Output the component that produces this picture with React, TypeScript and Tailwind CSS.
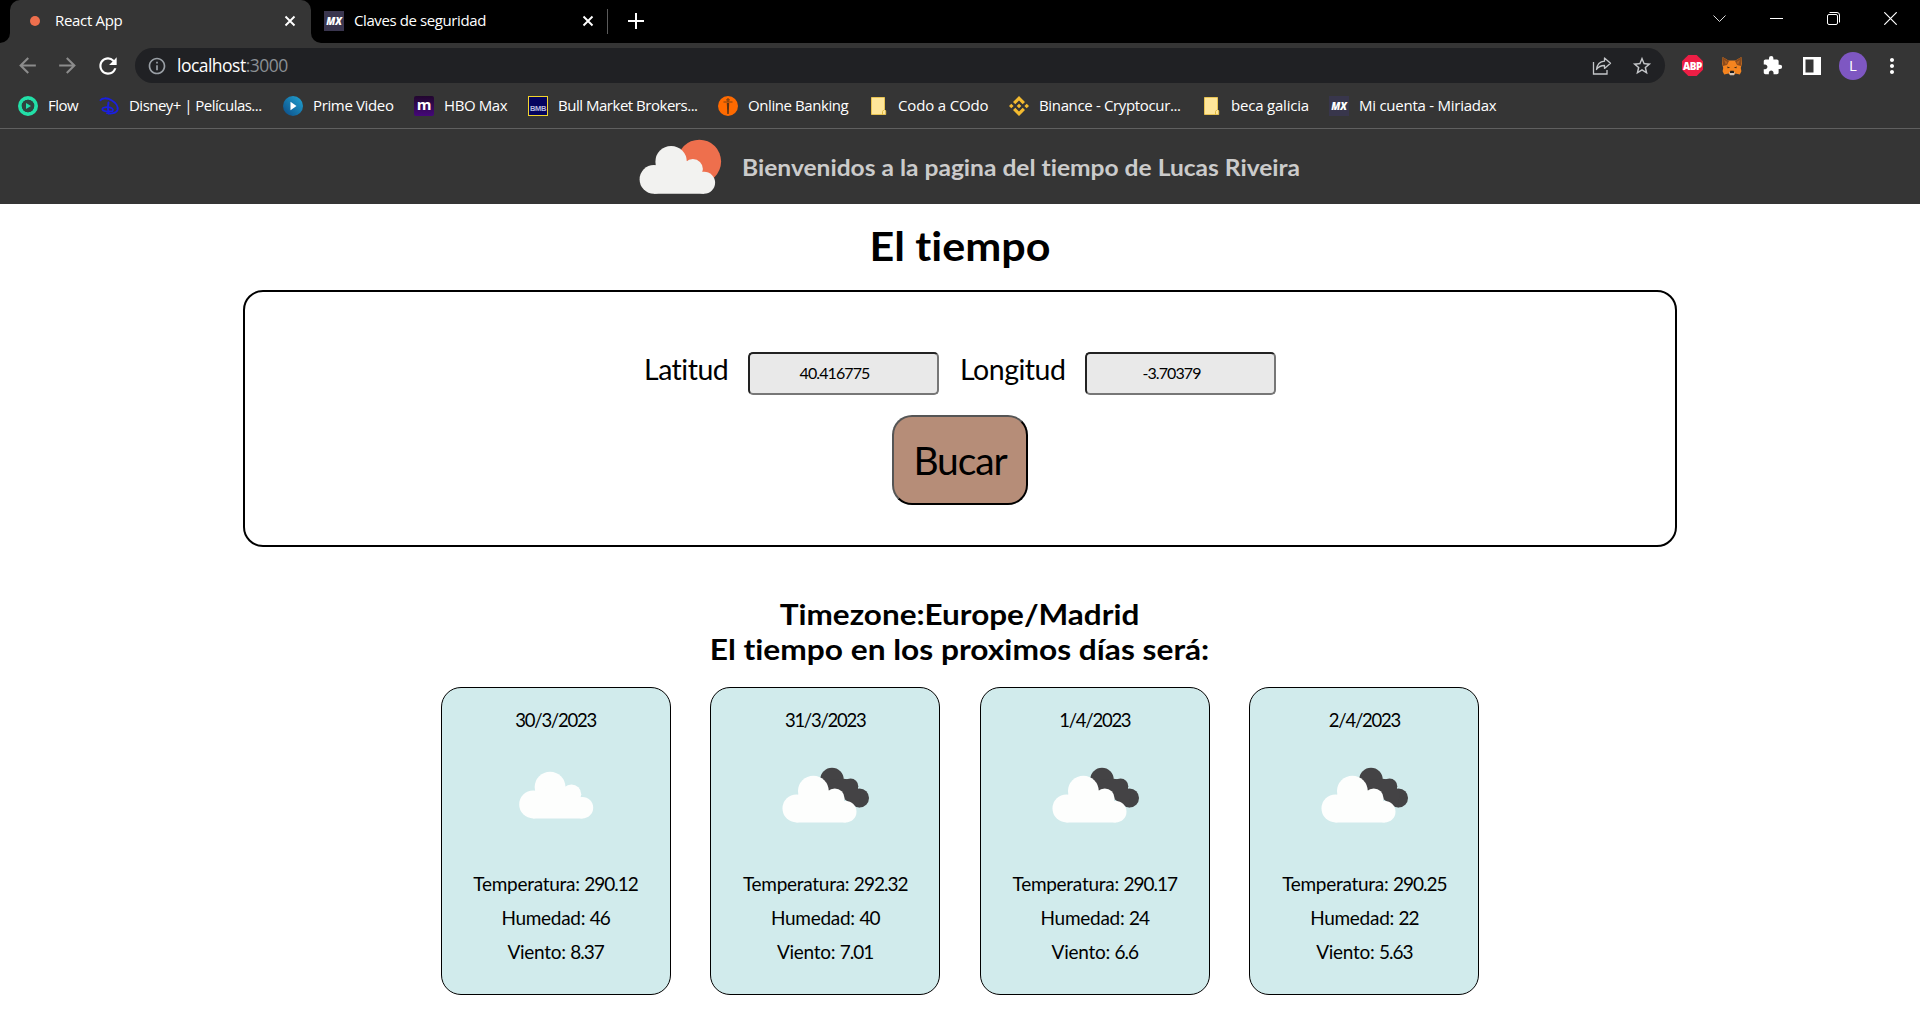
import type { ReactNode } from "react";
import { MdArrowBack, MdArrowForward, MdRefresh, MdInfoOutline, MdStarBorder, MdExtension, MdMoreVert } from "react-icons/md";

const CloseX = () => (
  <svg width="12" height="12" viewBox="0 0 12 12" stroke="#fff" strokeWidth="1.9">
    <path d="M1.5 1.5l9 9M10.5 1.5l-9 9" />
  </svg>
);

const MxIcon = ({ bg }: { bg: string }) => (
  <span className={`flex size-5 items-center justify-center text-[10px] leading-none font-extrabold italic text-white ${bg}`}>MX</span>
);

const FolderIcon = () => (
  <svg width="20" height="20" viewBox="0 0 20 20">
    <path d="M3.5 1.5h13v12l1.2 1.2v3.8H3.5z" fill="#ffe69a" stroke="#e8c352" strokeWidth="1" />
    <path d="M14.5 18.5v-3l1.2-1.5" fill="none" stroke="#e0b93f" strokeWidth="1" />
  </svg>
);

const FlowIcon = () => (
  <svg width="20" height="20" viewBox="0 0 20 20">
    <circle cx="10" cy="10" r="8.1" fill="none" stroke="#22e0a8" strokeWidth="3.8" />
    <circle cx="10" cy="10" r="6.2" fill="#2f4540" />
    <path d="M8 7l5 3-5 3z" fill="#22e0a8" />
  </svg>
);

const DisneyIcon = () => (
  <svg width="21" height="20" viewBox="0 0 21 20" fill="none" stroke="#1a1fe0" strokeLinecap="round">
    <path d="M1.5 4.2C3 1.8 8 1.6 12.5 4.2c4.5 2.6 7 6.6 6 9.8-1.1 3.2-6.5 4.2-10.5 3.2" strokeWidth="1.9" />
    <path d="M9.5 6.5c-.8 3.5-.8 7.5.2 11" strokeWidth="2" />
    <path d="M9 11.2c-3.5-.2-6.5 1-5.5 2.6 1.2 1.8 6 1.9 10 1.4 1.5-2.2-1.5-4-4-3.8" strokeWidth="1.7" />
  </svg>
);

const PrimeIcon = () => (
  <svg width="20" height="20" viewBox="0 0 20 20">
    <defs>
      <linearGradient id="prime" x1="1" y1="0" x2="0" y2="1">
        <stop offset="0" stopColor="#22a5d4" />
        <stop offset="1" stopColor="#0b4a85" />
      </linearGradient>
    </defs>
    <circle cx="10" cy="10" r="10" fill="url(#prime)" />
    <path d="M7.5 5.8l6 4.2-6 4.2z" fill="#fff" />
  </svg>
);

const HboIcon = () => (
  <span className="flex size-5 justify-center rounded-[2px] bg-linear-to-b from-[#22062f] to-[#45067a] font-['Open_Sans'] text-[15px] leading-[17px] font-bold text-white">m</span>
);

const BmbIcon = () => (
  <span className="flex size-5 items-end justify-center overflow-hidden border border-[#f2d52c] bg-[#04045e] pb-[2px] font-['Liberation_Sans'] text-[7.5px] leading-[8px] tracking-[-0.3px] font-bold text-[#b9b9dd]">BMB</span>
);

const BankIcon = () => (
  <svg width="20" height="20" viewBox="0 0 20 20">
    <circle cx="10" cy="10" r="10" fill="#ff6a00" />
    <path d="M8.8 7h2.4l-.5 11H9.3z" fill="#5a3212" />
    <path d="M5.5 6h9M10 2v4M8.2 3.8h3.6" stroke="#7a4212" strokeWidth="1.2" />
  </svg>
);

const BinanceIcon = () => (
  <svg width="20" height="20" viewBox="0 0 20 20" fill="#f3ba2f">
    <path d="M10 7.7l2.3 2.3L10 12.3 7.7 10zM2.3 7.7L4.6 10l-2.3 2.3L0 10zM17.7 7.7L20 10l-2.3 2.3-2.3-2.3z" />
    <path d="M10 0l6 6-2.3 2.3L10 4.6 6.3 8.3 4 6zM10 20l6-6-2.3-2.3L10 15.4l-3.7-3.7L4 14z" />
  </svg>
);

const bookmarks: { label: string; icon: ReactNode; cls: string }[] = [
  { label: "Flow", icon: <FlowIcon />, cls: "w-[81px] tracking-[-0.5px]" },
  { label: "Disney+ | Películas...", icon: <DisneyIcon />, cls: "w-[184px] tracking-[-0.52px]" },
  { label: "Prime Video", icon: <PrimeIcon />, cls: "w-[131px] tracking-[-0.36px]" },
  { label: "HBO Max", icon: <HboIcon />, cls: "w-[114px] tracking-[-0.4px]" },
  { label: "Bull Market Brokers...", icon: <BmbIcon />, cls: "w-[190px] tracking-[-0.48px]" },
  { label: "Online Banking", icon: <BankIcon />, cls: "w-[150px] tracking-[-0.42px]" },
  { label: "Codo a COdo", icon: <FolderIcon />, cls: "w-[141px] tracking-[-0.15px]" },
  { label: "Binance - Cryptocur...", icon: <BinanceIcon />, cls: "w-[192px] tracking-[-0.35px]" },
  { label: "beca galicia", icon: <FolderIcon />, cls: "w-[128px] tracking-[-0.2px]" },
  { label: "Mi cuenta - Miriadax", icon: <MxIcon bg="bg-[#38364c]" />, cls: "w-[180px] tracking-[-0.25px]" },
];

const ShareIcon = () => (
  <svg width="20" height="20" viewBox="0 0 20 20" fill="none" stroke="#c4c6c9" strokeWidth="1.3">
    <path d="M1.5 6v12H15v-4" />
    <path d="M12.5 2l6 5.2-6 5.2V9.5c-3.5 0-6 1-8 4 .5-4.5 3.2-7.8 8-8.3z" strokeLinejoin="round" />
  </svg>
);

const AbpIcon = () => (
  <span className="flex size-[21px] items-center justify-center bg-[#ed1e45] font-['Open_Sans'] text-[10px] leading-none font-extrabold tracking-[-0.5px] text-white [clip-path:polygon(30%_0,70%_0,100%_30%,100%_70%,70%_100%,30%_100%,0_70%,0_30%)]">ABP</span>
);

const FoxIcon = () => (
  <svg width="20" height="20" viewBox="0 0 20 20">
    <path d="M.6 1l5.9 3.5h7L19.4 1l.4 7-1 4 .6 3.2-1.6 3.3-4.3-1-1.5 1.5H8L6.5 17.500l-4.3 1L.6 15.2l.6-3.2-1-4z" fill="#f5841f" />
    <path d="M.6 1L7 5l-2 4-4.200 1zM19.4 1L13 5l2 4 4.2 1z" fill="#8a4a1c" />
    <path d="M2 4l3.5 2L4 9zM18 4l-3.5 2L16 9z" fill="#b5621f" />
    <path d="M5.2 10.5l3 1.3-2.6.5zM14.800 10.500l-3 1.3 2.6.5z" fill="#3a2a1c" />
    <path d="M7 16h6l-1 3.3H8z" fill="#d5c4b5" />
    <path d="M8.3 14.8h3.4l.5 2.2H7.800z" fill="#1c1c1c" />
  </svg>
);

const PanelIcon = () => (
  <svg width="18" height="18" viewBox="0 0 18 18">
    <path d="M0 0h18v18H0zM2.5 2.5v13h8v-13z" fill="#fff" fillRule="evenodd" />
  </svg>
);

const CloudShape = ({ fill }: { fill: string }) => (
  <g fill={fill}>
    <circle cx="14.3" cy="33.4" r="14.3" />
    <circle cx="31.5" cy="15.7" r="15.7" />
    <circle cx="53.3" cy="23" r="10" />
    <circle cx="64.5" cy="36.7" r="11" />
    <path d="M14.3 47.7h50.2V25.7L60 27 47 15 31 16 16 19.3v5L14.3 30z" />
  </g>
);

const SunCloud = () => (
  <svg width="84" height="56" viewBox="0 0 84 56">
    <circle cx="60.3" cy="22.5" r="21.8" fill="#ee6f4d" />
    <g transform="translate(.6 7)">
      <CloudShape fill="#f2f2f0" />
    </g>
  </svg>
);

const WeatherIcon = ({ broken }: { broken: boolean }) =>
  broken ? (
    <svg width="100" height="100" viewBox="0 0 100 100">
      <g transform="translate(7.5 30.7) scale(.98)">
        <g fill="#444345">
          <circle cx="50.5" cy="4" r="12" />
          <circle cx="69.5" cy="10.7" r="7.8" />
          <circle cx="78.6" cy="22.7" r="9.7" />
          <path d="M50 4l12-1 7.500 1 10 12-1 16.400-12-6-20-15z" />
        </g>
        <CloudShape fill="#fdfefd" />
      </g>
    </svg>
  ) : (
    <svg width="100" height="100" viewBox="0 0 100 100">
      <g transform="translate(13.2 26.7) scale(.98)">
        <CloudShape fill="#fdfefd" />
      </g>
    </svg>
  );

const days = [
  { date: "30/3/2023", temp: "290.12", hum: "46", wind: "8.37", broken: false },
  { date: "31/3/2023", temp: "292.32", hum: "40", wind: "7.01", broken: true },
  { date: "1/4/2023", temp: "290.17", hum: "24", wind: "6.6", broken: true },
  { date: "2/4/2023", temp: "290.25", hum: "22", wind: "5.63", broken: true },
];

const Stat = ({ name, value }: { name: string; value: string }) => (
  <p className="leading-[34px] tracking-[-0.28px]">
    {name}: <span className="tracking-[-1px]">{value}</span>
  </p>
);

function BrowserChrome() {
  return (
    <div className="h-[129px] border-b border-[#606060] bg-[#353535] font-['Open_Sans',sans-serif] text-[15px] text-white">
      <div className="flex h-[43px] bg-black">
        <div className="w-[10px] bg-[#353535]">
          <div className="h-full rounded-br-[10px] bg-black" />
        </div>
        <div className="flex w-[301px] items-center rounded-t-[10px] bg-[#353535] pb-px pl-5">
          <span className="size-[10px] rounded-full bg-[#ee6f4d]" />
          <span className="ml-[15px] flex-1 pb-px tracking-[-0.32px]">React App</span>
          <span className="mr-[15px]"><CloseX /></span>
        </div>
        <div className="w-[10px] bg-[#353535]">
          <div className="h-full rounded-bl-[10px] bg-black" />
        </div>
        <div className="flex w-[287px] items-center pb-px pl-[3px]">
          <MxIcon bg="bg-[#3a364f]" />
          <span className="ml-[10px] flex-1 pb-px tracking-[-0.4px]">Claves de seguridad</span>
          <span className="mr-[13px]"><CloseX /></span>
          <span className="h-[25px] w-px bg-[#5a5a5a]" />
        </div>
        <div className="flex flex-1 items-center pb-px pl-5">
          <svg width="16" height="16" viewBox="0 0 16 16" stroke="#fff" strokeWidth="2"><path d="M0 8h16M8 0v16" /></svg>
        </div>
        <div className="flex items-start gap-[44px] pt-3 pr-[23px]">
          <svg width="13" height="13" viewBox="0 0 13 13" fill="none" stroke="#ddd"><path d="M.5 3.5l6 6 6-6" /></svg>
          <svg width="13" height="13" viewBox="0 0 13 13" stroke="#fff"><path d="M0 6.500h13" /></svg>
          <svg width="13" height="13" viewBox="0 0 13 13" fill="none" stroke="#fff"><rect x=".5" y="2.5" width="10" height="10" rx="1.5" /><path d="M2.5.5H10A2.500 2.500 0 0112.500 3v7.500" /></svg>
          <svg width="13" height="13" viewBox="0 0 13 13" stroke="#fff" strokeWidth="1.2"><path d="M.3.3l12.4 12.4M12.7.3L.3 12.7" /></svg>
        </div>
      </div>
      <div className="flex h-[45px] items-center pl-[15px]">
        <MdArrowBack size={25} color="#8c8c8c" />
        <MdArrowForward size={25} color="#8c8c8c" className="ml-[15px]" />
        <MdRefresh size={26} color="#fff" className="ml-[15px]" />
        <div className="ml-[14px] flex h-[35px] w-[1530px] items-center rounded-full bg-[#202124] pl-[12px]">
          <MdInfoOutline size={20} color="#9aa0a6" />
          <span className="ml-[10px] flex-1 pb-px text-[17.5px] tracking-[-0.52px]">localhost<span className="text-[#8b8f94]">:3000</span></span>
          <ShareIcon />
          <MdStarBorder size={22} color="#c4c6c9" className="mr-[12px] ml-[19px]" />
        </div>
        <div className="ml-[17px] flex items-center">
          <AbpIcon />
          <span className="ml-[19px]"><FoxIcon /></span>
          <MdExtension size={21} color="#fff" className="ml-[20px]" />
          <span className="ml-[20px]"><PanelIcon /></span>
          <span className="ml-[18px] flex size-7 items-center justify-center rounded-full bg-[#7e57c2] text-[15px]">L</span>
          <MdMoreVert size={24} color="#fff" className="ml-[13px]" />
        </div>
      </div>
      <div className="flex h-9 items-center pl-[18px]">
        {bookmarks.map((b) => (
          <div key={b.label} className={`flex shrink-0 items-center whitespace-nowrap ${b.cls}`}>
            <span className="mr-[10px] w-5 tracking-normal">{b.icon}</span>
            <span className="pb-[2px]">{b.label}</span>
          </div>
        ))}
      </div>
    </div>
  );
}

function Field({ label, value, cls }: { label: string; value: string; cls: string }) {
  return (
    <div className="flex items-center gap-[19px]">
      <label className={`pb-[9px] text-[28.5px] leading-8 whitespace-nowrap ${cls}`}>{label}</label>
      <input
        readOnly
        value={value}
        className="h-[43px] w-[191px] rounded-[5px] border-2 border-t-[#222] border-r-[#777] border-b-[#777] border-l-[#222] bg-[#e9e9e9] pr-[18px] pb-[3px] text-center text-[16px] tracking-[-0.9px]"
      />
    </div>
  );
}

export default function App() {
  return (
    <div className="h-[1020px] overflow-hidden bg-white font-['Lato',sans-serif] text-black [font-variant-ligatures:none]">
      <BrowserChrome />
      <header className="flex h-[75px] bg-[#353535] pl-[638.7px]">
        <div className="pt-[10.3px]"><SunCloud /></div>
        <p className="ml-[19.5px] origin-left scale-x-[1.068] text-[23px] leading-[77px] font-bold whitespace-nowrap text-[#cbcbcb]">
          Bienvenidos a la pagina del tiempo de Lucas Riveira
        </p>
      </header>
      <main className="flex flex-col items-center">
        <h1 className="mt-[18px] scale-x-[1.09] text-[39.5px] leading-[48px] font-bold">El tiempo</h1>
        <section className="mt-5 flex h-[257px] w-[1434px] flex-col items-center rounded-[20px] border-2 border-black pt-[60px]">
          <div className="flex gap-[21px]">
            <Field label="Latitud" value="40.416775" cls="w-[85px] tracking-[-0.5px]" />
            <Field label="Longitud" value="-3.70379" cls="w-[106px] tracking-[-0.5px]" />
          </div>
          <button className="mt-5 h-[90px] w-[136px] rounded-[20px] border-2 border-t-[#555] border-r-black border-b-black border-l-[#555] bg-[#b68d78] text-[39px] leading-none tracking-[-1.1px]">
            Bucar
          </button>
        </section>
        <h2 className="mt-[49px] text-center text-[29px] leading-[35px] font-bold">
          <span className="block scale-x-[1.085]">Timezone:Europe/Madrid</span>
          <span className="block scale-x-[1.093]">El tiempo en los proximos días será:</span>
        </h2>
        <div className="mt-[21px] flex gap-[39.6px]">
          {days.map((d) => (
            <article key={d.date} className="flex h-[308px] w-[230px] flex-col items-center rounded-[20px] border border-black bg-[#d1ebec] pt-5 text-[19px]">
              <p className="text-[18.5px] leading-6 tracking-[-1.25px]">{d.date}</p>
              <div className="mt-[13px] mb-[22px] h-[100px]"><WeatherIcon broken={d.broken} /></div>
              <Stat name="Temperatura" value={d.temp} />
              <Stat name="Humedad" value={d.hum} />
              <Stat name="Viento" value={d.wind} />
            </article>
          ))}
        </div>
      </main>
    </div>
  );
}
